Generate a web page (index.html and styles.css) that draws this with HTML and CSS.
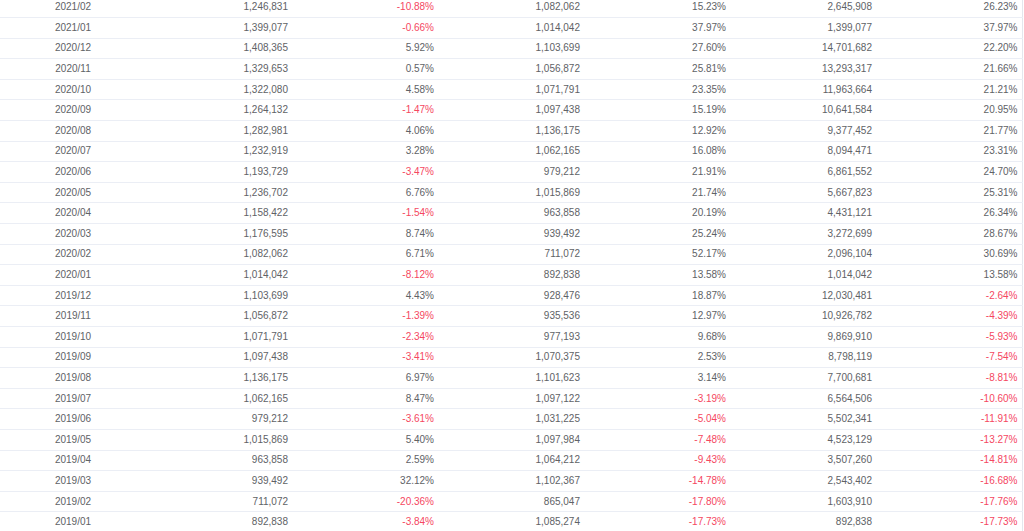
FILE: index.html
```html
<!DOCTYPE html>
<html>
<head>
<meta charset="utf-8">
<link rel="stylesheet" href="styles.css">
</head>
<body>
<div class="wrap">
<table class="grid">
<colgroup><col><col><col><col><col><col><col></colgroup>
<tbody>
<tr><td>2021/02</td><td>1,246,831</td><td class="neg">-10.88%</td><td>1,082,062</td><td>15.23%</td><td>2,645,908</td><td>26.23%</td></tr>
<tr><td>2021/01</td><td>1,399,077</td><td class="neg">-0.66%</td><td>1,014,042</td><td>37.97%</td><td>1,399,077</td><td>37.97%</td></tr>
<tr><td>2020/12</td><td>1,408,365</td><td>5.92%</td><td>1,103,699</td><td>27.60%</td><td>14,701,682</td><td>22.20%</td></tr>
<tr><td>2020/11</td><td>1,329,653</td><td>0.57%</td><td>1,056,872</td><td>25.81%</td><td>13,293,317</td><td>21.66%</td></tr>
<tr><td>2020/10</td><td>1,322,080</td><td>4.58%</td><td>1,071,791</td><td>23.35%</td><td>11,963,664</td><td>21.21%</td></tr>
<tr><td>2020/09</td><td>1,264,132</td><td class="neg">-1.47%</td><td>1,097,438</td><td>15.19%</td><td>10,641,584</td><td>20.95%</td></tr>
<tr><td>2020/08</td><td>1,282,981</td><td>4.06%</td><td>1,136,175</td><td>12.92%</td><td>9,377,452</td><td>21.77%</td></tr>
<tr><td>2020/07</td><td>1,232,919</td><td>3.28%</td><td>1,062,165</td><td>16.08%</td><td>8,094,471</td><td>23.31%</td></tr>
<tr><td>2020/06</td><td>1,193,729</td><td class="neg">-3.47%</td><td>979,212</td><td>21.91%</td><td>6,861,552</td><td>24.70%</td></tr>
<tr><td>2020/05</td><td>1,236,702</td><td>6.76%</td><td>1,015,869</td><td>21.74%</td><td>5,667,823</td><td>25.31%</td></tr>
<tr><td>2020/04</td><td>1,158,422</td><td class="neg">-1.54%</td><td>963,858</td><td>20.19%</td><td>4,431,121</td><td>26.34%</td></tr>
<tr><td>2020/03</td><td>1,176,595</td><td>8.74%</td><td>939,492</td><td>25.24%</td><td>3,272,699</td><td>28.67%</td></tr>
<tr><td>2020/02</td><td>1,082,062</td><td>6.71%</td><td>711,072</td><td>52.17%</td><td>2,096,104</td><td>30.69%</td></tr>
<tr><td>2020/01</td><td>1,014,042</td><td class="neg">-8.12%</td><td>892,838</td><td>13.58%</td><td>1,014,042</td><td>13.58%</td></tr>
<tr><td>2019/12</td><td>1,103,699</td><td>4.43%</td><td>928,476</td><td>18.87%</td><td>12,030,481</td><td class="neg">-2.64%</td></tr>
<tr><td>2019/11</td><td>1,056,872</td><td class="neg">-1.39%</td><td>935,536</td><td>12.97%</td><td>10,926,782</td><td class="neg">-4.39%</td></tr>
<tr><td>2019/10</td><td>1,071,791</td><td class="neg">-2.34%</td><td>977,193</td><td>9.68%</td><td>9,869,910</td><td class="neg">-5.93%</td></tr>
<tr><td>2019/09</td><td>1,097,438</td><td class="neg">-3.41%</td><td>1,070,375</td><td>2.53%</td><td>8,798,119</td><td class="neg">-7.54%</td></tr>
<tr><td>2019/08</td><td>1,136,175</td><td>6.97%</td><td>1,101,623</td><td>3.14%</td><td>7,700,681</td><td class="neg">-8.81%</td></tr>
<tr><td>2019/07</td><td>1,062,165</td><td>8.47%</td><td>1,097,122</td><td class="neg">-3.19%</td><td>6,564,506</td><td class="neg">-10.60%</td></tr>
<tr><td>2019/06</td><td>979,212</td><td class="neg">-3.61%</td><td>1,031,225</td><td class="neg">-5.04%</td><td>5,502,341</td><td class="neg">-11.91%</td></tr>
<tr><td>2019/05</td><td>1,015,869</td><td>5.40%</td><td>1,097,984</td><td class="neg">-7.48%</td><td>4,523,129</td><td class="neg">-13.27%</td></tr>
<tr><td>2019/04</td><td>963,858</td><td>2.59%</td><td>1,064,212</td><td class="neg">-9.43%</td><td>3,507,260</td><td class="neg">-14.81%</td></tr>
<tr><td>2019/03</td><td>939,492</td><td>32.12%</td><td>1,102,367</td><td class="neg">-14.78%</td><td>2,543,402</td><td class="neg">-16.68%</td></tr>
<tr><td>2019/02</td><td>711,072</td><td class="neg">-20.36%</td><td>865,047</td><td class="neg">-17.80%</td><td>1,603,910</td><td class="neg">-17.76%</td></tr>
<tr><td>2019/01</td><td>892,838</td><td class="neg">-3.84%</td><td>1,085,274</td><td class="neg">-17.73%</td><td>892,838</td><td class="neg">-17.73%</td></tr>
</tbody>
</table>
</div>
</body>
</html>
```

FILE: styles.css
```css
html, body {
  margin: 0;
  padding: 0;
  background: #ffffff;
  overflow: hidden;
}

.wrap {
  margin-top: -3px;
  width: 1022px;
}

.grid {
  width: 1022px;
  table-layout: fixed;
  border-collapse: collapse;
  border-right: 1px solid #e4e7ed;
  font-family: "Liberation Sans", Arial, sans-serif;
  font-size: 10px;
  color: #606266;
}

.grid col {
  width: 146px;
}

.grid td {
  height: 20.6px;
  padding: 0 4px 0 0;
  box-sizing: border-box;
  text-align: right;
  border-bottom: 1px solid #ebeef5;
  white-space: nowrap;
  line-height: 12px;
}

.grid td:first-child {
  text-align: center;
  padding: 0;
}

.grid td.neg {
  color: #f5475f;
}
```
